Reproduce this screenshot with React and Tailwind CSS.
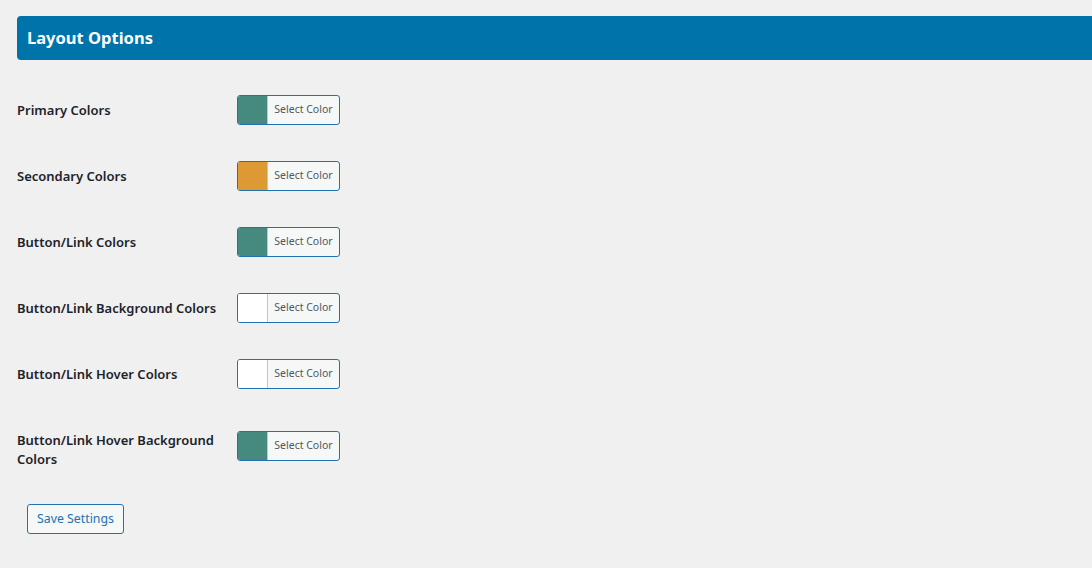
const rows = [
    { label: 'Primary Colors', color: '#45897f' },
    { label: 'Secondary Colors', color: '#dd9933' },
    { label: 'Button/Link Colors', color: '#45897f' },
    { label: 'Button/Link Background Colors', color: '#ffffff' },
    { label: 'Button/Link Hover Colors', color: '#ffffff' },
    { label: 'Button/Link Hover Background Colors', color: '#45897f', tall: true },
];

const ColorPicker = ({ color, className = '' }) => (
    <button
        type="button"
        className={`flex h-[30px] w-[103px] overflow-hidden rounded-[3px] border border-[#2271b1] bg-[#f6f7f7] ${className}`}
    >
        <span className="h-full w-[30px] border-r border-[#c3c4c7]" style={{ backgroundColor: color }} />
        <span className="flex h-full flex-1 items-center justify-center text-[10.5px] text-[#50575e]">Select Color</span>
    </button>
);

const App = () => {
    return (
        <div className="min-h-screen w-full overflow-hidden bg-[#f0f0f1] pt-4 pl-[17px] font-['Noto_Sans',sans-serif] text-[#1d2327]">
            <div className="-mr-4 flex h-[44px] items-center rounded-l-[4px] bg-[#0073aa] pl-[10px]">
                <h1 className="text-[16.5px] font-bold text-white">Layout Options</h1>
            </div>

            <div className="mt-[17px]">
                {rows.map((row) => (
                    <div
                        key={row.label}
                        className={`flex items-center ${row.tall ? 'h-[85px]' : 'h-[66px]'}`}
                    >
                        <div className="w-[220px] pr-5 text-[13px] leading-[19px] font-semibold">{row.label}</div>
                        <ColorPicker color={row.color} className={row.tall ? 'mb-[7px]' : ''} />
                    </div>
                ))}
            </div>

            <button
                type="button"
                className="mt-3 ml-[10px] h-[30px] w-[97px] rounded-[3px] border border-[#2271b1] bg-[#f6f7f7] text-[12.3px] text-[#2271b1]"
            >
                Save Settings
            </button>
        </div>
    );
};

export default App;
